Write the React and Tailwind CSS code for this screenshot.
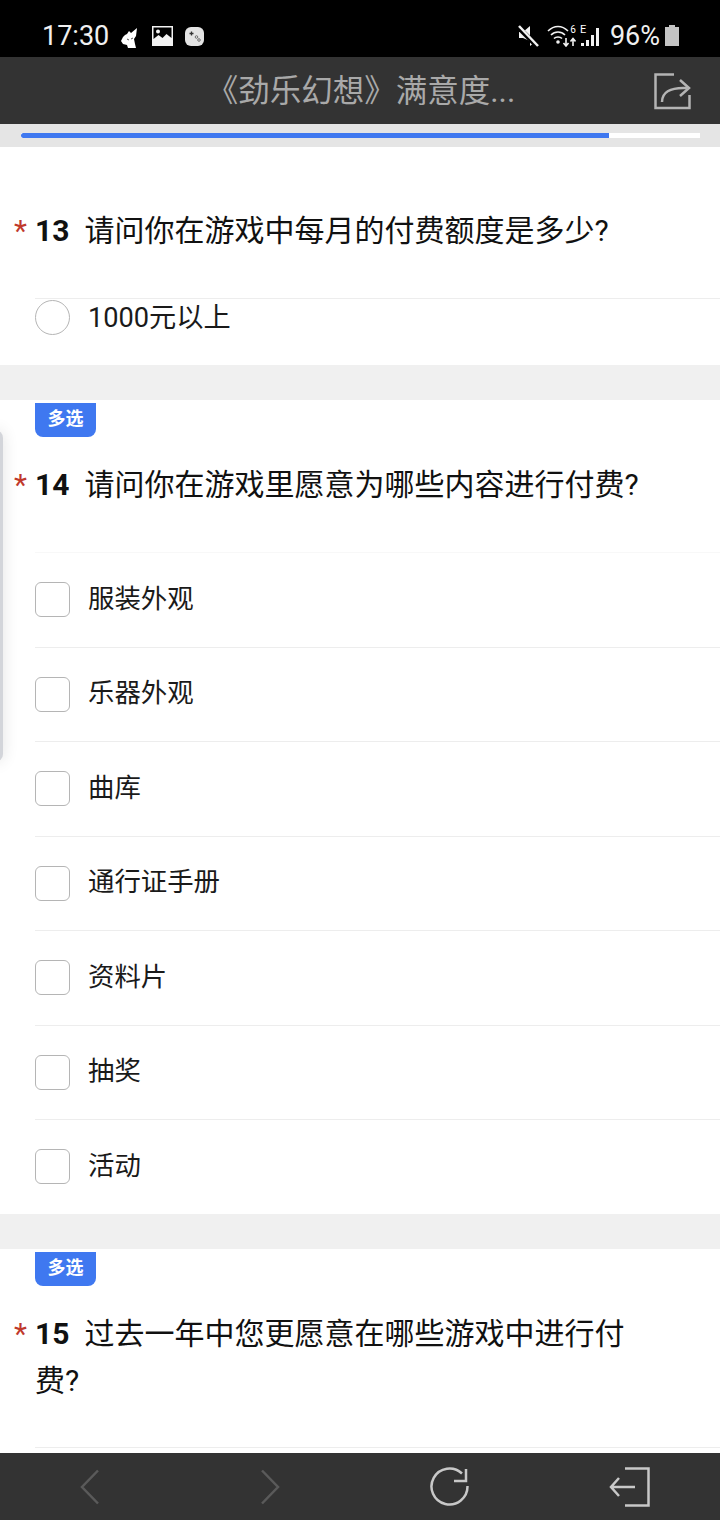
const cjk = "font-['Roboto','Noto_Sans_CJK_SC',sans-serif]";

function Tag() {
  return (
    <div className="ml-[35px] mt-[3px] flex h-[34px] w-[61px] items-center justify-center rounded-b-lg bg-[#3f78f0] pb-[3px] text-[18px] font-bold text-white">
      多选
    </div>
  );
}

function Question({ num, text, className }) {
  return (
    <div className={`flex pl-[14px] pr-[75px] text-[30px] leading-[47px] text-[#111] ${className}`}>
      <span className="w-[21px] shrink-0 text-[#c0392b]">*</span>
      <p>
        <b className="mr-[15px] font-bold">{num}</b>
        {text}
      </p>
    </div>
  );
}

function CheckRow({ label, first }) {
  return (
    <div className={`ml-[35px] flex h-[94.5px] items-center border-t ${first ? "border-[#f8f8f8]" : "border-[#ededed]"}`}>
      <span className="h-[35px] w-[35px] rounded-[6px] border border-[#b5b5b5] bg-white" />
      <span className="ml-[18px] text-[26.4px] text-[#1a1a1a]">{label}</span>
    </div>
  );
}

function Gap() {
  return <div className="h-[35px] bg-[#f0f0f0]" />;
}

export default function App() {
  const options = ["服装外观", "乐器外观", "曲库", "通行证手册", "资料片", "抽奖", "活动"];

  return (
    <div className={`relative flex h-[1520px] w-[720px] flex-col overflow-hidden bg-white ${cjk}`}>
      {/* status bar */}
      <div className="flex h-[57px] shrink-0 items-center bg-black pl-[42px] pr-[41px] pt-[16px] text-[#f0f0f0]">
        <span className="text-[27px] font-['Roboto']">17:30</span>
        <svg className="ml-[12px] mt-[3px]" width="17" height="22" viewBox="0 0 17 22">
          <path d="M4 8l2-1 2-3 2 2 6-5-1 8-2 3 1 5 1 4H7l-1-3-4-1-2-3 2-4z" fill="#fff" />
          <path d="M6 12l2 1M10 12l2-1" stroke="#555" strokeWidth="1" />
        </svg>
        <svg className="ml-[14px] -mt-[1px]" width="21" height="20" viewBox="0 0 21 20">
          <path fillRule="evenodd" d="M0 0h21v20H0zM1.500 1.500V13l5-4 4 3 4-4 5 4V1.500z" fill="#f2f2f2" />
          <circle cx="6" cy="5.500" r="2" fill="#f2f2f2" />
        </svg>
        <svg className="ml-[12px] -mt-[1px]" width="19" height="19" viewBox="0 0 19 19">
          <rect width="19" height="19" rx="6" fill="#e4e4e4" />
          <path d="M4.500 6.500h4M6.500 4.500v4" stroke="#333" strokeWidth="1.300" />
          <circle cx="11.500" cy="10" r="1.300" fill="none" stroke="#555" strokeWidth=".8" />
          <circle cx="14" cy="13" r="1.300" fill="none" stroke="#555" strokeWidth=".8" />
        </svg>
        <div className="ml-auto flex items-center">
          <svg className="-mt-[2px]" width="21" height="22" viewBox="0 0 21 22">
            <path d="M1 7h4l7-6v15l-7-3H1z" fill="#f2f2f2" />
            <path d="M12 14l5 3-5 4z" fill="#f2f2f2" />
            <path d="M0 2l19 19" stroke="#000" strokeWidth="5" />
            <path d="M1 1l19 20" stroke="#f2f2f2" strokeWidth="2.500" />
          </svg>
          <div className="relative ml-[8px] -mt-[2px] h-[22px] w-[29px]">
            <svg width="29" height="22" viewBox="0 0 29 22" fill="none" stroke="#f2f2f2" strokeWidth="1.600">
              <path d="M1 6c6-6 14-6 20 0" />
              <path d="M4 10c4-4 10-4 14 0" />
              <path d="M7 13.500c2-2 6-2 8 0" />
              <circle cx="11" cy="17" r="1" fill="#f2f2f2" />
              <path d="M19 13v8M16.500 18l2.500 3 2.500-3M26 21v-7M23.500 16.500l2.500-3 2.500 3" />
            </svg>
            <span className="absolute right-0 top-0 text-[10px] leading-[10px] text-white">6</span>
          </div>
          <div className="ml-[4px] flex w-[22px] flex-col -mt-[2px]">
            <span className="h-0 text-[11px] leading-[10px] text-white">E</span>
            <svg width="22" height="22" viewBox="0 0 22 22" fill="#f2f2f2">
              <rect x="1" y="18" width="3" height="3" />
              <rect x="6" y="15" width="3" height="6" />
              <rect x="11" y="10" width="3" height="11" />
              <rect x="16" y="3" width="3" height="18" />
            </svg>
          </div>
          <span className="ml-[8px] text-[27px] font-['Roboto']">96%</span>
          <svg className="ml-[5px] -mt-[2px]" width="14" height="21" viewBox="0 0 14 21">
            <path d="M4 0h6v2h4v19H0V2h4z" fill="#c4c4c4" />
          </svg>
        </div>
      </div>

      {/* header */}
      <div className="relative flex h-[67px] shrink-0 items-center justify-center bg-[#333] pt-[2px] text-[31.500px] text-[#a9a9a9]">
        <span className="ml-[2px]">《劲乐幻想》满意度...</span>
        <svg className="absolute right-[29px] top-[16px]" width="37" height="37" viewBox="0 0 37 37" fill="none" stroke="#b4b4b4" strokeWidth="2.500">
          <path d="M20 1.500H1.500v33.500h34V22" />
          <path d="M8 29c0-9 7-15 25-14" />
          <path d="M26 7l9 8-9 8" />
        </svg>
      </div>

      {/* progress */}
      <div className="flex h-[23px] shrink-0 items-start bg-[#e5e5e5] pl-[21px] pr-[20px] pt-[9px]">
        <div className="h-[5px] w-full bg-white">
          <div className="h-[5px] w-[588px] rounded-l-full bg-[#3f78f0]" />
        </div>
      </div>

      {/* q13 */}
      <section className="h-[218px] shrink-0 bg-white">
        <Question num="13" text="请问你在游戏中每月的付费额度是多少?" className="pt-[60px]" />
        <div className="ml-[35px] mt-[44px] flex h-[36px] items-center border-t border-[#ededed] pt-px">
          <span className="h-[35px] w-[35px] rounded-full border border-[#b5b5b5]" />
          <span className="ml-[18px] mt-[3px] text-[27.200px] leading-none text-[#1a1a1a]">1000元以上</span>
        </div>
      </section>

      <Gap />

      {/* q14 */}
      <section className="shrink-0 bg-white">
        <Tag />
        <Question num="14" text="请问你在游戏里愿意为哪些内容进行付费?" className="mt-[24px]" />
        <div className="mt-[44px]">
          {options.map((o, i) => (
            <CheckRow key={o} label={o} first={i === 0} />
          ))}
        </div>
      </section>

      <Gap />

      {/* q15 */}
      <section className="min-h-0 flex-1 bg-white">
        <Tag />
        <Question num="15" text="过去一年中您更愿意在哪些游戏中进行付费?" className="mt-[24px]" />
        <div className="ml-[35px] mt-[43px] border-t border-[#ededed]" />
      </section>

      {/* bottom toolbar */}
      <div className="flex h-[67px] shrink-0 items-center bg-[#333]">
        <div className="flex w-[180px] justify-center">
          <svg width="20" height="36" viewBox="0 0 20 36" fill="none" stroke="#5a5a5a" strokeWidth="2.500">
            <path d="M18 1.500L2 18l16 16.500" />
          </svg>
        </div>
        <div className="flex w-[180px] justify-center">
          <svg width="20" height="36" viewBox="0 0 20 36" fill="none" stroke="#5a5a5a" strokeWidth="2.500">
            <path d="M2 1.500L18 18 2 34.500" />
          </svg>
        </div>
        <div className="flex w-[180px] justify-center">
          <svg width="40" height="40" viewBox="0 0 40 40" fill="none" stroke="#c8c8c8" strokeWidth="2.500">
            <path d="M32 6.500A18 18 0 1 0 37.500 19" />
            <path d="M36 2v12H24" />
          </svg>
        </div>
        <div className="flex w-[180px] justify-center">
          <svg className="-ml-[2px]" width="42" height="40" viewBox="0 0 42 40" fill="none" stroke="#c8c8c8" strokeWidth="2.500">
            <path d="M17 1.500h23.500v37H17" />
            <path d="M27 20H3M11 11l-8 9 8 9" />
          </svg>
        </div>
      </div>

      {/* floating panel edge on the left */}
      <div className="absolute left-[-10px] top-[430px] h-[332px] w-[13px] rounded-r-lg bg-[#d3d5da] shadow-[0_0_16px_rgba(0,0,0,0.12)]" />
    </div>
  );
}
